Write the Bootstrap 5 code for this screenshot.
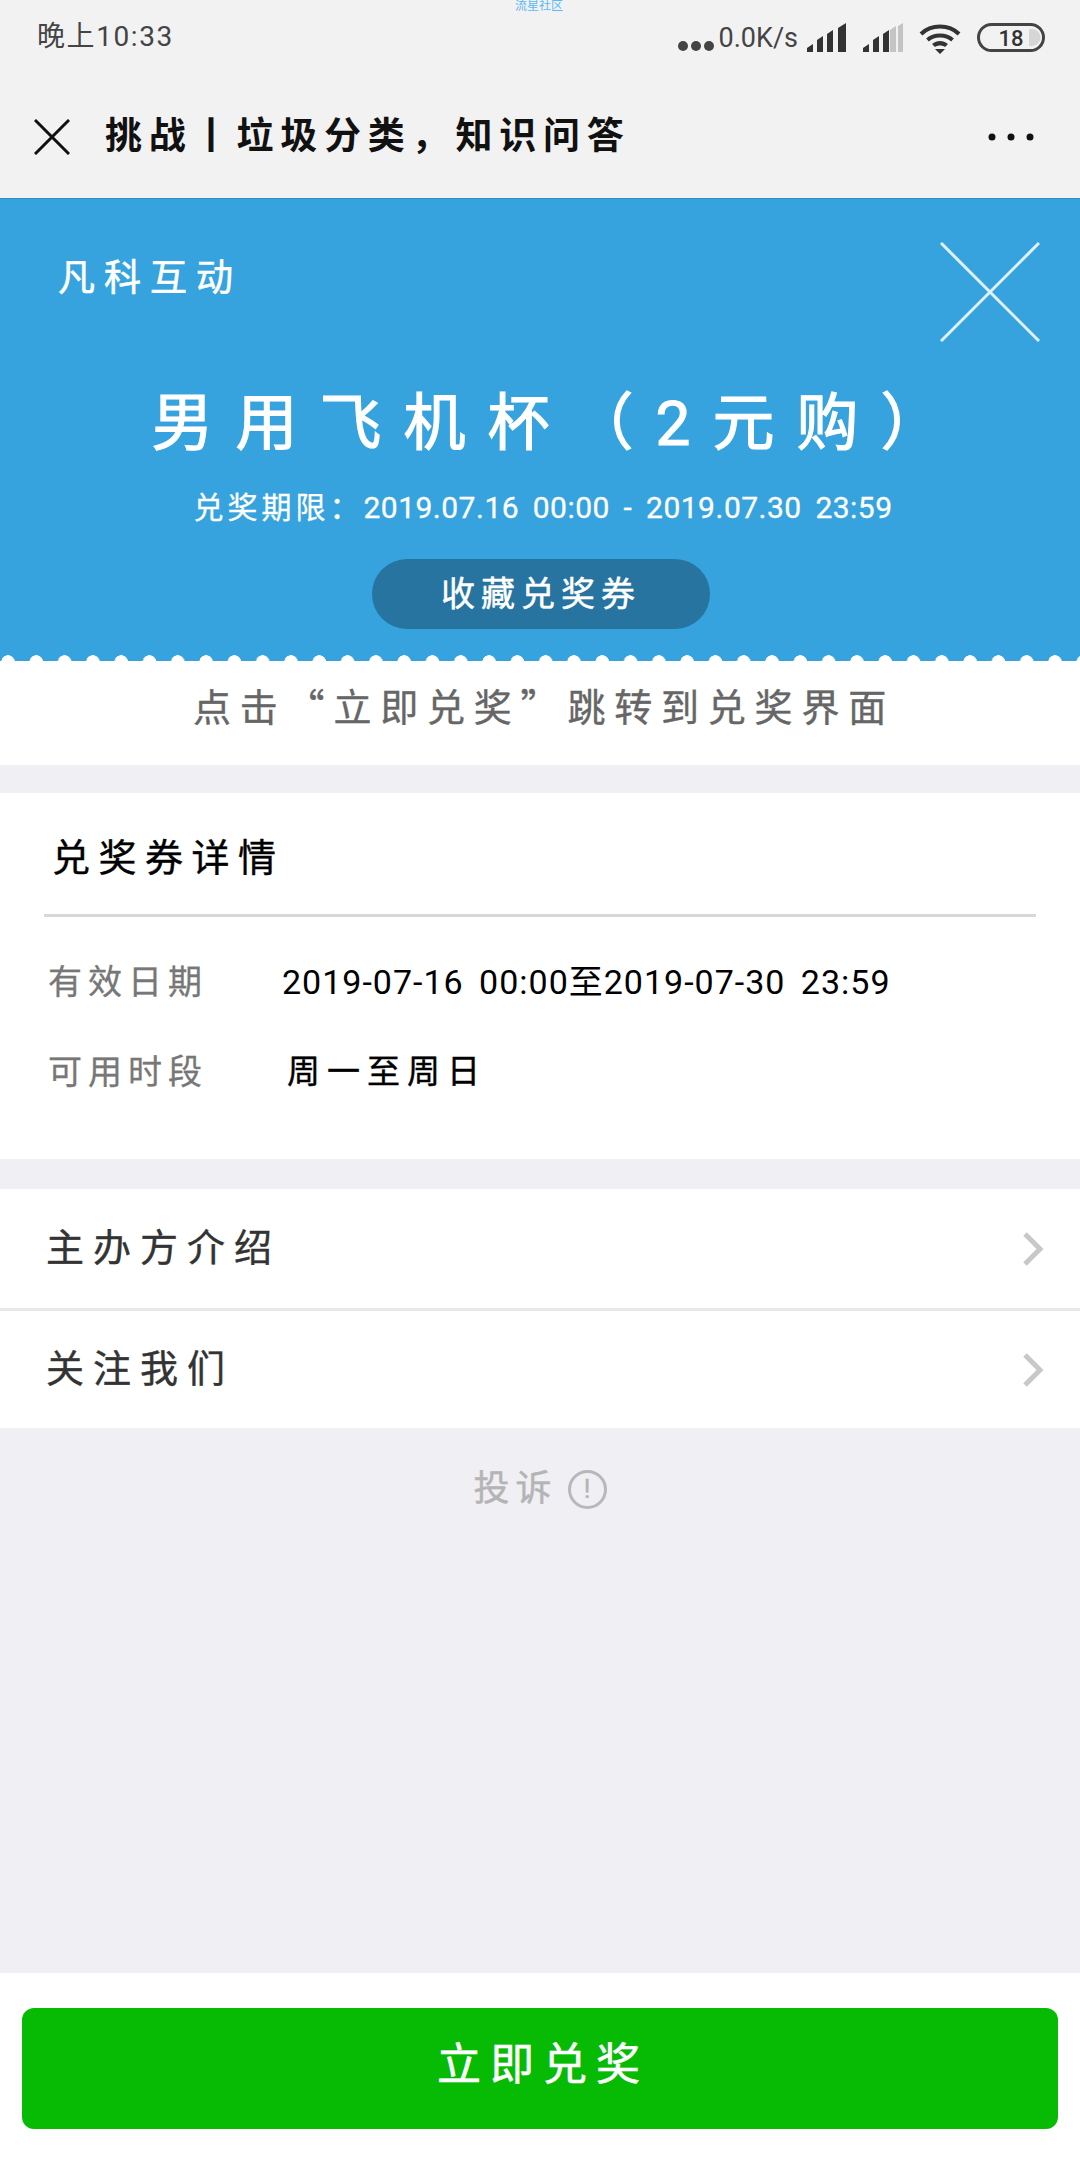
<!DOCTYPE html>
<html lang="zh-CN">
<head>
    <meta charset="UTF-8">
    <meta name="viewport" content="width=device-width, initial-scale=1.0">
    <title>立即兑奖</title>
    <link rel="stylesheet" href="https://cdn.jsdelivr.net/npm/bootstrap@5.3.0/dist/css/bootstrap.min.css">
    <style>
        body {
            font-family: Roboto, "Noto Sans CJK SC", sans-serif;
            background: #efeff4;
            width: 1080px;
            height: 2160px;
            overflow: hidden;
        }
        .screen { height: 2160px; }

        /* status bar + title bar */
        .status-bar { height: 60px; background: #f2f2f2; padding: 14px 35px 0 37px; color: #444; font-size: 28px; line-height: 46px; letter-spacing: 1.600px; }
        .status-icons { padding-top: 9px; letter-spacing: 0; }
        .watermark { position: absolute; top: 0; left: 515px; font-size: 12px; line-height: 13px; color: #5bb8f5; }
        .net-speed { font-size: 27px; line-height: 30px; margin: 0 9px 0 5px; }
        .batt { width: 68px; height: 29px; }
        .title-bar { height: 139px; background: #f2f2f2; padding: 16px 46px 0 34px; border-bottom: 1px solid #2f8fc5; }
        .title-text { font-size: 37px; font-weight: 700; letter-spacing: 6.800px; color: #111; margin-left: 35px; line-height: 50px; }

        /* coupon */
        .coupon { height: 462px; background: #36a3df; color: #fff; padding: 43px 40px 0 58px; }
        .coupon-head { height: 100px; }
        .brand { font-size: 37px; letter-spacing: 9px; line-height: 50px; margin-top: 12px; -webkit-text-stroke: .6px #fff; }
        .coupon-title { font-size: 62px; letter-spacing: 22px; line-height: 86px; margin: 39px 0 0 18px; font-weight: 400; -webkit-text-stroke: 1.200px #fff; }
        .coupon-date { font-size: 30px; line-height: 42px; margin: 20px 0 0 -12px; letter-spacing: .5px; word-spacing: 5.700px; -webkit-text-stroke: .3px #fff; }
        .coupon-date span { letter-spacing: 4px; }
        .save-btn { width: 338px; height: 70px; margin: 30px 0 0 314px; padding: 0; background: #26749f; border: 0; border-radius: 35px; color: #fff; font-size: 34px; letter-spacing: 6px; -webkit-text-stroke: .5px #fff; }
        .scallop {
            position: absolute; left: 0; right: 0; bottom: 0; height: 6px;
            background: radial-gradient(circle at 8px 7px, #fff 6.5px, transparent 7px) repeat-x;
            background-size: 28.3px 7px;
        }
        .tip { height: 104px; background: #fff; color: #666; font-family: "Noto Sans CJK SC", sans-serif; font-size: 38px; letter-spacing: 8.800px; padding: 0 0 18px 8px; -webkit-text-stroke: .4px #666; }

        /* details */
        .detail { height: 366px; background: #fff; margin-top: 28px; padding: 0 44px; }
        .detail-head { height: 124px; margin-bottom: 20px; padding: 10px 0 0 8px; font-size: 38px; letter-spacing: 8.500px; color: #000; border-bottom: 3px solid #d8d8d8; -webkit-text-stroke: .4px #000; }
        .detail-row { height: 90px; font-size: 34px; color: #000; letter-spacing: 1px; word-spacing: 6px; }
        .detail-label { width: 238px; padding-left: 4px; color: #777; font-size: 34px; letter-spacing: 6px; flex: none; -webkit-text-stroke: .3px #777; }
        .days { font-size: 33px; letter-spacing: 7px; padding-left: 5px; -webkit-text-stroke: .4px #000; }

        /* links */
        .link-list { margin-top: 30px; background: #fff; }
        .link-item { height: 119px; padding: 0 36px 0 46px; background: #fff; border: 0; border-radius: 0; color: #333; font-size: 38px; letter-spacing: 9px; -webkit-text-stroke: .4px #333; }
        .link-item + .link-item { height: 120px; border-top: 3px solid #e8e8e8; }
        .report { height: 122px; color: #b4b4b4; font-size: 36px; letter-spacing: 6px; -webkit-text-stroke: .4px #b4b4b4; }
        .report-mark { width: 39px; height: 39px; border: 3px solid #b8b8b8; border-radius: 50%; margin-left: 10px; font-size: 26px; font-weight: 400; line-height: 32px; letter-spacing: 0; text-align: center; }

        /* bottom */
        .bottom-bar { height: 187px; background: #fff; padding: 35px 22px 31px; }
        .go-btn { height: 121px; padding: 0 0 8px 6px; background: #07bb05; border: 0; border-radius: 12px; color: #fff; font-size: 44px; letter-spacing: 9px; -webkit-text-stroke: .6px #fff; }
    </style>
</head>
<body>
    <div class="screen d-flex flex-column position-relative">
        <div class="watermark">流星社区</div>

        <div class="status-bar d-flex justify-content-between align-items-start">
            <div>晚上10:33</div>
            <div class="status-icons d-flex align-items-start">
                <svg width="36" height="36" viewBox="0 0 36 36"><circle cx="5" cy="23" r="5" fill="#444"/><circle cx="18" cy="23" r="5" fill="#444"/><circle cx="31" cy="23" r="5" fill="#444"/></svg>
                <span class="net-speed">0.0K/s</span>
                <svg width="40" height="30" viewBox="0 0 40 30" class="me-3" fill="#333"><path d="M0 29v-4l6-4v8zM10 29V17l6-4v16zM20 29V11l6-4v22zM31 29V5l8-5v29z"/></svg>
                <svg width="40" height="30" viewBox="0 0 40 30" class="me-3" fill="#333"><path d="M0 29v-4l6-4v8zM10 29V17l6-4v16zM20 29V11l6-4v22z"/><path fill="#c4c4c4" d="M27 29V7l6-4v26zM35 29V3l5-3v29z"/></svg>
                <svg width="42" height="31" viewBox="0 0 42 31" class="me-3"><g fill="none" stroke="#333" stroke-width="4"><path d="M2 11C12 1 30 1 40 11"/><path d="M8.500 17C15 11 27 11 33.500 17"/></g><path d="M13 21c5-4 11-4 16 0l-3 3c-3-2-7-2-10 0zM16 26h10l-5 5z" fill="#333"/></svg>
                <svg class="batt" viewBox="0 0 68 29"><rect x="1.500" y="1.500" width="65" height="26" rx="13" fill="none" stroke="#444" stroke-width="3"/><path d="M52 6h3a8.500 8.500 0 0 1 0 17h-3z" fill="#d6d6d6"/><text x="34" y="23" text-anchor="middle" font-size="22" font-weight="500" fill="#333" font-family="Roboto, sans-serif">18</text></svg>
            </div>
        </div>

        <div class="title-bar d-flex align-items-center">
            <svg width="36" height="36" viewBox="0 0 36 36" stroke="#111" stroke-width="3"><path d="M1 1l34 34M35 1L1 35"/></svg>
            <div class="title-text flex-grow-1">挑战丨垃圾分类，知识问答</div>
            <svg width="46" height="8" viewBox="0 0 46 8" fill="#111"><circle cx="4" cy="4" r="3.500"/><circle cx="23" cy="4" r="3.500"/><circle cx="42" cy="4" r="3.500"/></svg>
        </div>

        <div class="coupon position-relative">
            <div class="coupon-head d-flex justify-content-between align-items-start">
                <div class="brand">凡科互动</div>
                <svg width="100" height="100" viewBox="0 0 100 100" stroke="#fff" stroke-opacity=".85" stroke-width="3"><path d="M1 1l98 98M99 1L1 99"/></svg>
            </div>
            <h1 class="coupon-title text-center">男用飞机杯（2元购）</h1>
            <div class="coupon-date text-center"><span>兑奖期限：</span>2019.07.16 00:00 - 2019.07.30 23:59</div>
            <button class="btn save-btn d-block" type="button">收藏兑奖券</button>
            <div class="scallop"></div>
        </div>

        <div class="tip d-flex align-items-center justify-content-center">点击“立即兑奖”跳转到兑奖界面</div>

        <div class="detail">
            <div class="detail-head d-flex align-items-center">兑奖券详情</div>
            <div class="detail-row d-flex align-items-center">
                <div class="detail-label">有效日期</div>
                <div>2019-07-16 00:00至2019-07-30 23:59</div>
            </div>
            <div class="detail-row d-flex align-items-center">
                <div class="detail-label">可用时段</div>
                <div class="days">周一至周日</div>
            </div>
        </div>

        <div class="list-group rounded-0 link-list">
            <a class="list-group-item link-item d-flex justify-content-between align-items-center" href="#">主办方介绍
                <svg width="22" height="34" viewBox="0 0 22 34" fill="none" stroke="#c8c8c8" stroke-width="5"><path d="M3 2l15 15L3 32"/></svg>
            </a>
            <a class="list-group-item link-item d-flex justify-content-between align-items-center" href="#">关注我们
                <svg width="22" height="34" viewBox="0 0 22 34" fill="none" stroke="#c8c8c8" stroke-width="5"><path d="M3 2l15 15L3 32"/></svg>
            </a>
        </div>

        <div class="report d-flex align-items-center justify-content-center">投诉<span class="report-mark d-inline-block">!</span></div>
        <div class="flex-grow-1"></div>

        <div class="bottom-bar">
            <button class="btn go-btn w-100" type="button">立即兑奖</button>
        </div>
    </div>
    <script src="https://cdn.jsdelivr.net/npm/bootstrap@5.3.0/dist/js/bootstrap.bundle.min.js"></script>
</body>
</html>
